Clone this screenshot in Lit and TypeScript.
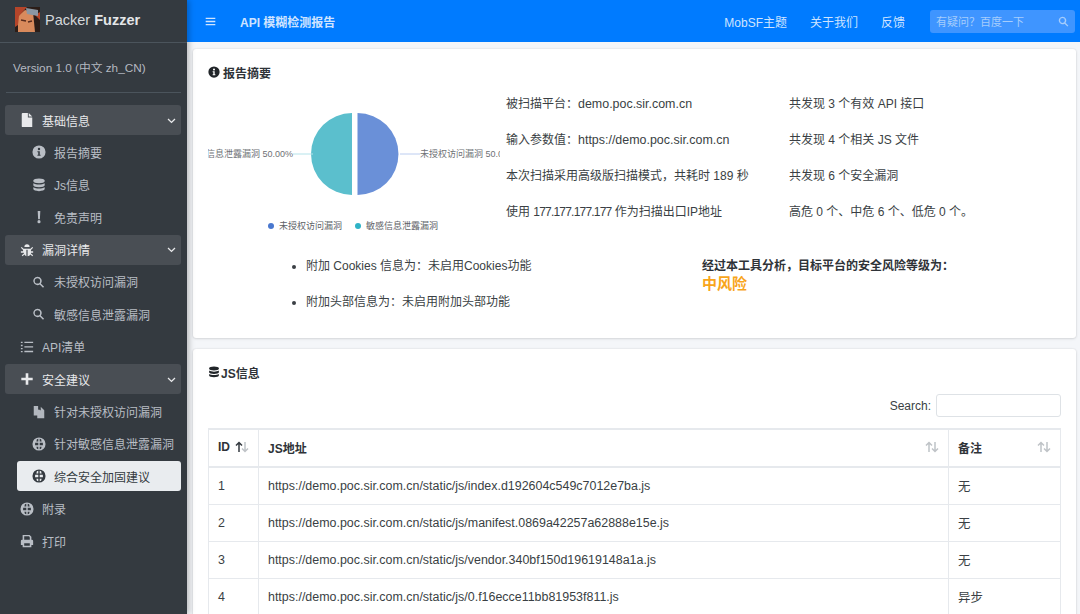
import { LitElement, html, css, svg } from "lit";
import { customElement } from "lit/decorators.js";

const icons: Record<string, unknown> = {
  file: svg`<path d="M3 0h6v5h5v11H3a1 1 0 0 1-1-1V1a1 1 0 0 1 1-1zM10 0l4 4h-4z"/>`,
  info: svg`<path fill-rule="evenodd" d="M8 .5a7.5 7.5 0 1 1 0 15 7.5 7.5 0 0 1 0-15zM8 3.2a1.4 1.4 0 1 0 0 2.8 1.4 1.4 0 0 0 0-2.8zM6.2 7v1.3h.9v2.8h-.9v1.3h3.6v-1.3h-.9V7z"/>`,
  db: svg`<path d="M8 .5c3.600 0 6.500 1 6.500 2.300v.9C14.500 5 11.600 6 8 6S1.500 5 1.500 3.700v-.9C1.500 1.500 4.400.5 8 .5zM1.500 6c1.400 1 4 1.500 6.500 1.500S13.100 7 14.500 6v2.200C14.500 9.500 11.600 10.500 8 10.500S1.500 9.500 1.500 8.200zM1.500 10.500c1.400 1 4 1.500 6.500 1.500s5.100-.5 6.500-1.500v2.200c0 1.300-2.900 2.300-6.500 2.300s-6.500-1-6.500-2.300z"/>`,
  bang: svg`<path d="M6.500 1h3l-.5 9.500H7zM8 11.500a1.800 1.800 0 1 1 0 3.600 1.800 1.800 0 0 1 0-3.600z"/>`,
  bug: svg`<path d="M5 4.500a3 3 0 0 1 6 0zM1 5.500l1-1 2 2h8l2-2 1 1-2.500 2.500v1.500H15v1.500h-2.500v1l2.500 2-1 1-2-1.800A4 4 0 0 1 8.700 15V7.800H7.300V15A4 4 0 0 1 5 13.200L3 15l-1-1 2.500-2v-1H1V9.500h2.500V8z"/>`,
  search: svg`<path fill-rule="evenodd" d="M6.500 1a5.500 5.500 0 0 1 4.400 8.800l4.200 4.200-1.400 1.400-4.200-4.200A5.500 5.500 0 1 1 6.500 1zm0 2a3.500 3.500 0 1 0 0 7 3.500 3.500 0 0 0 0-7z"/>`,
  zoom: svg`<path fill-rule="evenodd" transform="translate(.5 1) scale(.88)" d="M6.500 1a5.500 5.500 0 0 1 4.400 8.800l4.200 4.200-1.400 1.400-4.200-4.200A5.500 5.500 0 1 1 6.500 1zm0 2a3.500 3.500 0 1 0 0 7 3.500 3.500 0 0 0 0-7z"/>`,
  list: svg`<path d="M1 2h2v1.500H1zM5 2h10v1.500H5zM1 5.500h2V7H1zM1 9h2v1.500H1zM1 12.500h2V14H1zM5 7.200h10v1.500H5zM5 12.400h10v1.500H5z"/>`,
  plus: svg`<path d="M6.500 1.500h3v5h5v3h-5v5h-3v-5h-5v-3h5z"/>`,
  copy: svg`<path d="M2 1h5v3.500a1 1 0 0 0 1 1h1V12H2zM6 6h4V2l4 4v9H6z" opacity=".95"/>`,
  globe: svg`<path fill-rule="evenodd" d="M8 .5a7.500 7.500 0 1 1 0 15 7.500 7.500 0 0 1 0-15zM5.600 2.500 5 5h2.200V2zM8.800 2v3H11l-.6-2.500zM3.600 6.500 3.500 9.500h3.700v-3zM8.800 6.500v3h3.700l-.1-3zM5 11l.6 2.500 1.600.5v-3zM8.800 11v3l1.600-.5L11 11z"/>`,
  print: svg`<path fill-rule="evenodd" d="M3 1h8l2 2v3.500h.5A1.500 1.500 0 0 1 15 8v4.500h-2V15H3v-2.500H1V8a1.500 1.500 0 0 1 1.500-1.500H3zm1.800 1.700v4h6.400V4L10.400 2.700zM4.800 10.500v2.800h6.400v-2.800z"/>`,
  down: svg`<path d="M2.600 4.600 8 9.800l5.400-5.200 1.600 1.600L8 13 1 6.200z"/>`,
  bars: svg`<path d="M1 2.500h14v2H1zM1 7h14v2H1zM1 11.500h14v2H1z"/>`,
};

const icon = (name: string) =>
  html`<svg class="ic" viewBox="0 0 16 16" fill="currentColor">${icons[name]}</svg>`;

const nav = [
  { icon: "file", label: "基础信息", kind: "group" },
  { icon: "info", label: "报告摘要", kind: "sub" },
  { icon: "db", label: "Js信息", kind: "sub" },
  { icon: "bang", label: "免责声明", kind: "sub" },
  { icon: "bug", label: "漏洞详情", kind: "group" },
  { icon: "zoom", label: "未授权访问漏洞", kind: "sub" },
  { icon: "zoom", label: "敏感信息泄露漏洞", kind: "sub" },
  { icon: "list", label: "API清单", kind: "root" },
  { icon: "plus", label: "安全建议", kind: "group" },
  { icon: "copy", label: "针对未授权访问漏洞", kind: "sub" },
  { icon: "globe", label: "针对敏感信息泄露漏洞", kind: "sub" },
  { icon: "globe", label: "综合安全加固建议", kind: "sub active" },
  { icon: "globe", label: "附录", kind: "root" },
  { icon: "print", label: "打印", kind: "root" },
];

const facts = [
  [html`被扫描平台：<span class="lat">demo.poc.sir.com.cn</span>`, "共发现 3 个有效 API 接口"],
  [html`输入参数值：<span class="lat">https://demo.poc.sir.com.cn</span>`, "共发现 4 个相关 JS 文件"],
  ["本次扫描采用高级版扫描模式，共耗时 189 秒", "共发现 6 个安全漏洞"],
  [html`使用 <span class="ip">177.177.177.177</span> 作为扫描出口IP地址`, "高危 0 个、中危 6 个、低危 0 个。"],
];

const rows = [
  ["1", "https://demo.poc.sir.com.cn/static/js/index.d192604c549c7012e7ba.js", "无"],
  ["2", "https://demo.poc.sir.com.cn/static/js/manifest.0869a42257a62888e15e.js", "无"],
  ["3", "https://demo.poc.sir.com.cn/static/js/vendor.340bf150d19619148a1a.js", "无"],
  ["4", "https://demo.poc.sir.com.cn/static/js/0.f16ecce11bb81953f811.js", "异步"],
];

const sortIcon = (active = false) => html`<svg class="sort" viewBox="0 0 14 12" fill="none" stroke-width="1.500">
  <path d="M4 11V2M1 4.500 4 1.500l3 3" stroke=${active ? "#343a40" : "#bfc3c7"} />
  <path d="M10 1v9M7 7.500l3 3 3-3" stroke="#bfc3c7" />
</svg>`;

@customElement("app-root")
export class AppRoot extends LitElement {
  static styles = css`
    :host {
      display: flex;
      width: 1080px;
      height: 614px;
      overflow: hidden;
      background: #f4f6f9;
      color: #3a3f44;
      font: 12px "Liberation Sans", "Noto Sans CJK SC", sans-serif;
    }
    .ic { width: 14px; height: 14px; flex: none; }
    .side {
      width: 187px;
      flex: none;
      background: #343a40;
      color: #c2c7d0;
      box-shadow: 2px 0 6px rgba(0, 0, 0, 0.25);
      z-index: 1;
    }
    .brand {
      height: 43px;
      box-sizing: border-box;
      display: flex;
      align-items: center;
      gap: 5px;
      padding: 0 0 3px 15px;
      border-bottom: 1px solid #4b545c;
      font-size: 14.500px;
      color: #d5d8dc;
    }
    .brand svg { width: 25px; height: 25px; }
    .brand b { color: #e4e6e8; }
    .version {
      margin: 0 6px;
      padding: 17px 7px 16px;
      border-bottom: 1px solid #4b545c;
      height: 16px;
      line-height: 16px;
      font-size: 11.750px;
      color: #b4b9c0;
    }
    .nav { padding: 12px 6px 0 5px; display: flex; flex-direction: column; }
    .item {
      height: 30px;
      margin-bottom: 2.400px;
      display: flex;
      align-items: center;
      border-radius: 3px;
      padding-left: 15px;
      gap: 8px;
      color: #b9bec5;
    }
    .group { background: #494e54; color: #e8e9eb; }
    .sub { padding-left: 27px; }
    .active { margin-left: 12px; padding-left: 15px; background: #e9ecef; color: #343a40; }
    .chev { width: 9px; height: 9px; margin-left: auto; margin-right: 5px; }
    .main { flex: 1; min-width: 0; display: flex; flex-direction: column; }
    .top {
      height: 42px;
      flex: none;
      background: #007bff;
      color: #cfe4ff;
      display: flex;
      align-items: center;
      padding: 0 5px 0 18px;
    }
    .top .ic { width: 11px; height: 11px; }
    .title { margin-left: 24px; font-weight: 700; font-size: 12px; }
    .links { margin-left: auto; display: flex; gap: 23px; }
    .find {
      margin-left: 25px;
      width: 145px;
      height: 23px;
      box-sizing: border-box;
      border-radius: 3px;
      background: #3f95ff;
      color: #a6cdfc;
      display: flex;
      align-items: center;
      justify-content: space-between;
      padding: 0 6px;
      font-size: 11px;
    }
    .card {
      background: #fff;
      margin: 7px 4px 0 6px;
      padding: 15px;
      border-radius: 3px;
      box-shadow: 0 0 2px rgba(0, 0, 0, 0.12), 0 1px 3px rgba(0, 0, 0, 0.1);
    }
    .card + .card { margin-top: 11px; }
    .summary { height: 259px; flex: none; }
    h3 {
      margin: 0;
      height: 16px;
      display: flex;
      align-items: center;
      gap: 3px;
      font-size: 12px;
      font-weight: 700;
      color: #2f3338;
    }
    h3 .ic { width: 12px; height: 12px; color: #212529; }
    .js h3 { gap: 1px; }
    .facts {
      display: grid;
      grid-template-columns: 298px 283px 1fr;
      grid-auto-rows: 36px;
      margin-top: 4px;
    }
    .fact { display: flex; align-items: center; }
    .lat { font-size: 12.450px; }
    .ip { letter-spacing: -0.800px; }
    .chart { grid-row: 1 / span 4; align-self: start; }
    .chart svg { display: block; width: 292px; height: 155px; }
    .chart text { font-size: 9px; fill: #6e7175; font-family: "Liberation Sans", "Noto Sans CJK SC", sans-serif; }
    .chart .lg { fill: #5d6166; }
    .extra { display: grid; grid-template-columns: 494px 1fr; margin-top: 29px; }
    ul { margin: 0; padding: 0 0 0 98px; }
    li { height: 36px; line-height: 18px; }
    .verdict { font-weight: 700; line-height: 18px; color: #2f3338; }
    .risk { color: #f8a51b; font-size: 15px; line-height: 18px; }
    .js { flex: 1; }
    .search {
      display: flex;
      justify-content: flex-end;
      align-items: center;
      gap: 5px;
      margin: 14px 0 11px;
    }
    .box {
      width: 125px;
      height: 23px;
      box-sizing: border-box;
      border: 1px solid #dee2e6;
      border-radius: 3px;
    }
    table { width: 100%; border-collapse: collapse; table-layout: fixed; }
    th, td {
      border: 1px solid #e6e9ed;
      padding: 0 9px;
      text-align: left;
      height: 37px;
      box-sizing: border-box;
    }
    td { font-size: 12.450px; }
    th { height: 38px; padding-bottom: 2px; border-bottom-width: 2px; border-top-width: 2px; color: #2f3338; }
    .cell { display: flex; align-items: center; justify-content: space-between; }
    .sort { width: 14px; height: 12px; }
  `;

  render() {
    return html`
      <aside class="side">
        <div class="brand">
          <svg viewBox="0 0 25 25">
            <rect width="25" height="25" fill="#2b1d18" />
            <path d="M3 25V9l7-6 8 2 2 20z" fill="#d98a5c" />
            <path d="M0 0h12L4 9l-1 9-3 2zM20 8l5-3v8z" fill="#b5452a" />
            <path d="M11 1l12 2v6L12 7z" fill="#8b97a3" />
            <path d="M6 13l5 1M13 15l4-1" stroke="#5a2c1e" stroke-width="1.500" />
          </svg>
          <span>Packer <b>Fuzzer</b></span>
        </div>
        <div class="version">Version 1.0 (中文 zh_CN)</div>
        <nav class="nav">
          ${nav.map(
            (n) => html`<div class="item ${n.kind}">
              ${icon(n.icon)}<span>${n.label}</span>
              ${n.kind === "group" ? html`<svg class="chev" viewBox="0 0 16 16" fill="currentColor">${icons.down}</svg>` : ""}
            </div>`
          )}
        </nav>
      </aside>
      <div class="main">
        <header class="top">
          ${icon("bars")}
          <span class="title">API 模糊检测报告</span>
          <div class="links"><span>MobSF主题</span><span>关于我们</span><span>反馈</span></div>
          <div class="find"><span>有疑问？百度一下</span>${icon("search")}</div>
        </header>
        <section class="card summary">
          <h3>${icon("info")}报告摘要</h3>
          <div class="facts">
            <div class="chart">
              <svg viewBox="0 0 292 155">
                <path d="M149.500 29v82a41 41 0 0 0 0-82z" fill="#6a90d8" />
                <path d="M144 29v82a41 41 0 0 1 0-82z" fill="#5bbfcd" />
                <path d="M192 70h20" stroke="#bccdf0" />
                <path d="M85 70h20" stroke="#b5e3ea" />
                <text x="85" y="73" text-anchor="end">敏感信息泄露漏洞 50.00%</text>
                <text x="212" y="73">未授权访问漏洞 50.00%</text>
                <circle cx="63" cy="142" r="3" fill="#4a78cf" />
                <text x="71" y="145" class="lg">未授权访问漏洞</text>
                <circle cx="150" cy="142" r="3" fill="#2fb3c6" />
                <text x="158" y="145" class="lg">敏感信息泄露漏洞</text>
              </svg>
            </div>
            ${facts.map(
              (f) => html`<div class="fact"><span>${f[0]}</span></div>
                <div class="fact"><span>${f[1]}</span></div>`
            )}
          </div>
          <div class="extra">
            <ul>
              <li>附加 Cookies 信息为：未启用Cookies功能</li>
              <li>附加头部信息为：未启用附加头部功能</li>
            </ul>
            <div>
              <div class="verdict">经过本工具分析，目标平台的安全风险等级为：</div>
              <div class="verdict risk">中风险</div>
            </div>
          </div>
        </section>
        <section class="card js">
          <h3>${icon("db")}JS信息</h3>
          <div class="search"><span>Search:</span><div class="box"></div></div>
          <table>
            <colgroup><col style="width:50px" /><col /><col style="width:112px" /></colgroup>
            <thead>
              <tr>
                <th><div class="cell">ID ${sortIcon(true)}</div></th>
                <th><div class="cell">JS地址 ${sortIcon()}</div></th>
                <th><div class="cell">备注 ${sortIcon()}</div></th>
              </tr>
            </thead>
            <tbody>
              ${rows.map((r) => html`<tr><td>${r[0]}</td><td>${r[1]}</td><td>${r[2]}</td></tr>`)}
            </tbody>
          </table>
        </section>
      </div>
    `;
  }
}
